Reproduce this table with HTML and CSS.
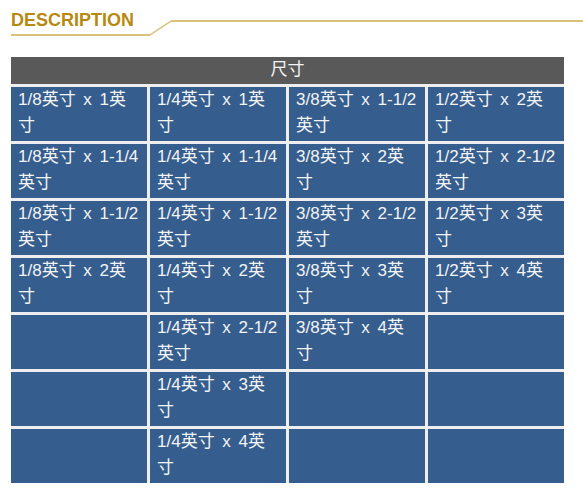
FILE: index.html
```html
<!DOCTYPE html>
<html lang="zh">
<head>
<meta charset="utf-8">
<title>Description</title>
<link rel="stylesheet" href="styles.css">
</head>
<body>
<div class="desc-head">
  <h2 class="desc-title">DESCRIPTION</h2>
  <svg class="desc-slant" width="21" height="26" viewBox="0 0 21 26"><line x1="0" y1="25" x2="21" y2="11" stroke="#d9c27e" stroke-width="1.5"/></svg>
  <div class="desc-rule"></div>
</div>
<div class="size-table">
  <div class="th">尺寸</div>
  <div class="td">1/8英寸 x 1英寸</div>
  <div class="td">1/4英寸 x 1英寸</div>
  <div class="td">3/8英寸 x 1-1/2英寸</div>
  <div class="td">1/2英寸 x 2英寸</div>
  <div class="td">1/8英寸 x 1-1/4英寸</div>
  <div class="td">1/4英寸 x 1-1/4英寸</div>
  <div class="td">3/8英寸 x 2英寸</div>
  <div class="td">1/2英寸 x 2-1/2英寸</div>
  <div class="td">1/8英寸 x 1-1/2英寸</div>
  <div class="td">1/4英寸 x 1-1/2英寸</div>
  <div class="td">3/8英寸 x 2-1/2英寸</div>
  <div class="td">1/2英寸 x 3英寸</div>
  <div class="td">1/8英寸 x 2英寸</div>
  <div class="td">1/4英寸 x 2英寸</div>
  <div class="td">3/8英寸 x 3英寸</div>
  <div class="td">1/2英寸 x 4英寸</div>
  <div class="td"></div>
  <div class="td">1/4英寸 x 2-1/2英寸</div>
  <div class="td">3/8英寸 x 4英寸</div>
  <div class="td"></div>
  <div class="td"></div>
  <div class="td">1/4英寸 x 3英寸</div>
  <div class="td"></div>
  <div class="td"></div>
  <div class="td"></div>
  <div class="td">1/4英寸 x 4英寸</div>
  <div class="td"></div>
  <div class="td"></div>
</div>
</body>
</html>
```
FILE: styles.css
```css
html, body {
  margin: 0;
  padding: 0;
  background: #ffffff;
}
body {
  font-family: "Liberation Sans", Arial, "Noto Sans CJK SC", sans-serif;
}
.desc-head {
  display: flex;
  align-items: flex-start;
  padding-top: 10px;
  padding-left: 11px;
  height: 26px;
}
.desc-title {
  margin: 0;
  width: 139px;
  height: 24px;
  font-size: 18px;
  line-height: 20px;
  font-weight: bold;
  color: #b8890f;
  border-bottom: 2px solid #d9c27e;
}
.desc-slant {
  display: block;
  flex: none;
}
.desc-rule {
  flex: 1;
  margin-top: 10px;
  border-top: 2px solid #d9c27e;
}
.size-table {
  margin: 21px 0 0 11px;
  width: 553px;
  display: grid;
  grid-template-columns: repeat(4, 136px);
  gap: 3px;
  background: #eeeeee;
  font-family: "Liberation Sans", Arial, "Noto Sans CJK SC", sans-serif;
  font-size: 17px;
  color: #f4f4f4;
}
.th {
  grid-column: 1 / 5;
  height: 27px;
  line-height: 25px;
  text-align: center;
  background: #595959;
}
.td {
  background: #355d8e;
  height: 54px;
  box-sizing: border-box;
  padding: 0 6px 2px 7px;
  line-height: 26px;
  word-spacing: 3px;
}
```
